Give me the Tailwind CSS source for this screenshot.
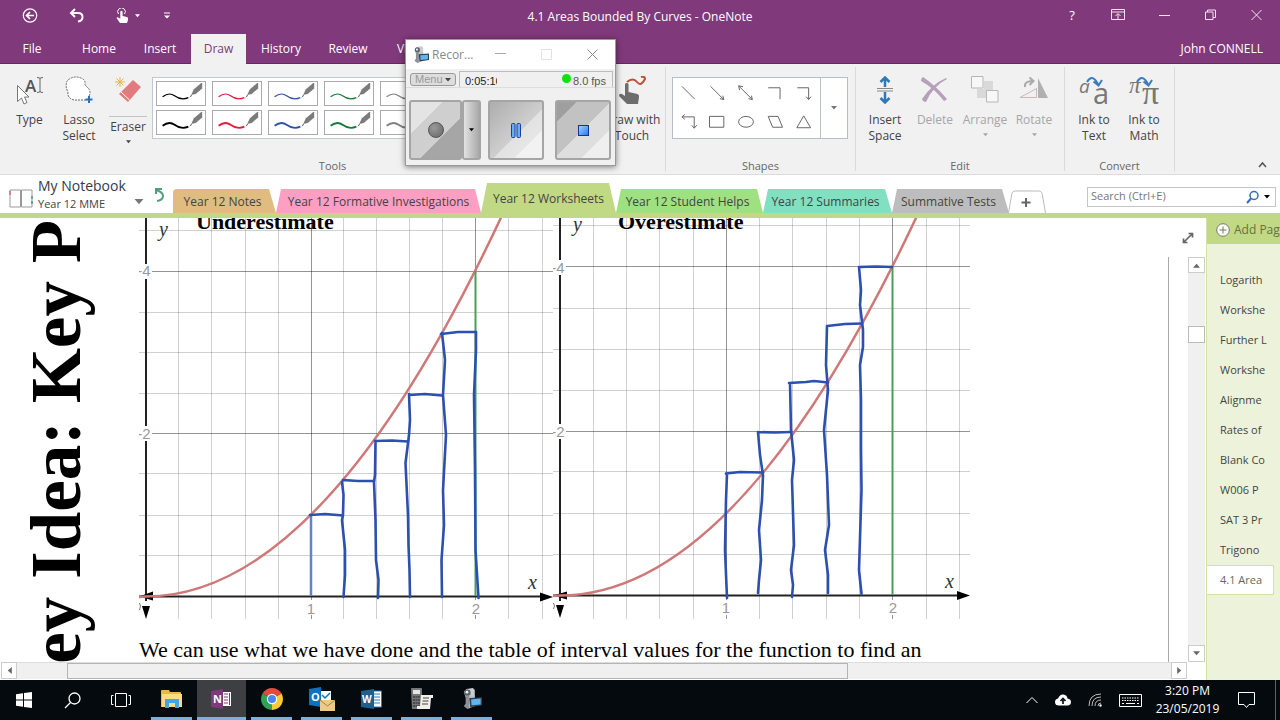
<!DOCTYPE html>
<html lang="en">
<head>
    <meta charset="UTF-8">
    <meta name="viewport" content="width=device-width, initial-scale=1.0">
    <title>4.1 Areas Bounded By Curves - OneNote</title>
    <script src="https://cdn.jsdelivr.net/npm/@tailwindcss/browser@4"></script>
</head>
<body class="h-screen flex flex-col overflow-hidden bg-white font-['Open_Sans','Noto_Sans',sans-serif] text-xs text-[#444]">

    <!-- shared shapes -->
    <svg class="hidden">
        <symbol id="pen-thin" viewBox="0 0 46 25">
            <path d="M3 16C7 13 12 12 16 15S24 20 31 17" fill="none" stroke="currentColor" stroke-width="1.3"/>
            <path d="M32 17l2-3 1 1z" fill="#444"/><path d="M34 14l3-6 8-7 1 0v6l-7 6z" fill="#7b7b7b"/>
        </symbol>
        <symbol id="pen-thick" viewBox="0 0 46 25">
            <path d="M3 16C7 13 12 12 16 15S24 20 31 17" fill="none" stroke="currentColor" stroke-width="2"/>
            <path d="M32 17l2-3 1 1z" fill="#444"/><path d="M34 14l3-6 8-7 1 0v6l-7 6z" fill="#7b7b7b"/>
        </symbol>
        <symbol id="caret" viewBox="0 0 6 4"><path d="M0 0h6L3 3.5z" fill="currentColor"/></symbol>
        <symbol id="camcorder" viewBox="0 0 22 24">
            <path d="M2 4l3-3 7-1 2 2v8H4z" fill="#c9cdd1"/><circle cx="6" cy="5" r="3.500" fill="#5b6066"/><circle cx="5.500" cy="4.500" r="1.500" fill="#eef2f5"/>
            <path d="M4 9l5-1v14l-3 1-4-3 2-3z" fill="#8c9197"/><path d="M8 8h6v12l-6 2z" fill="#bfc4c9"/>
            <path d="M8 11l14-1v9l-13 2z" fill="#33414e"/><path d="M10 12.500l10.500-1v6.500l-10 1z" fill="#62b4ee"/>
        </symbol>
    </svg>

    <header class="shrink-0 bg-[#80397b] text-white border-b border-[#6c2468]">
        <div class="relative h-[34px] flex items-center justify-between">
            <div class="flex items-center pb-[2px]">
                <button aria-label="Back" class="ml-[22px]"><svg class="size-4" viewBox="0 0 16 16" fill="none" stroke="#fff" stroke-width="1.200"><circle cx="8" cy="7.500" r="6.700"/><path stroke-width="1.700" d="M12 7.500H4.500M8 4L4.500 7.500 8 11"/></svg></button>
                <button aria-label="Undo" class="ml-[31px]"><svg class="size-4" viewBox="0 0 16 16" fill="none" stroke="#fff" stroke-width="2"><path d="M6 1L2 5l4 4M2 5h7c6 0 6 8 0 8.500"/></svg></button>
                <button aria-label="Touch mode" class="ml-[30px] flex items-center gap-1"><svg class="size-4" viewBox="0 0 16 16"><path d="M3.500 6A3.800 3.800 0 1 1 9.500 6" fill="none" stroke="#fff" stroke-width="1"/><path d="M5.300 3.500q1.200-1.300 2.300 0V8l4.400 1q1 .4 1 1.500V12l-1 3H5L1.500 10q.8-1.500 2.300-.3l1.500 1z" fill="#fff"/></svg><svg class="w-[5px] h-1"><use href="#caret"/></svg></button>
                <button aria-label="Customise toolbar" class="ml-[24px]"><svg class="w-[6px] h-2" viewBox="0 0 6 8"><path d="M0 1h6" stroke="#fff"/><path d="M0 3.500h6L3 6.500z" fill="#fff"/></svg></button>
            </div>
            <div class="absolute left-1/2 -translate-x-1/2 top-[9px]">4.1 Areas Bounded By Curves - OneNote</div>
            <div class="flex items-center pr-px pb-[3px]">
                <button aria-label="Help" class="w-[46px] text-[13px] text-center">?</button>
                <button aria-label="Ribbon display" class="w-[46px] flex justify-center"><svg class="w-[14px] h-3" viewBox="0 0 14 12" fill="none" stroke="#f3e6f2"><path d="M.5.5h13v10H.5zM.5 3h13M7 10V5M4.500 7L7 4.500 9.500 7"/></svg></button>
                <button aria-label="Minimise" class="w-[46px] flex justify-center"><svg class="w-[11px] h-3" viewBox="0 0 11 12"><path d="M0 6.500h11" stroke="#f3e6f2"/></svg></button>
                <button aria-label="Restore" class="w-[46px] flex justify-center"><svg class="w-[11px] h-3" viewBox="0 0 11 12" fill="none" stroke="#f3e6f2"><path d="M.5 3h7.500v7.500H.5zM2.500 3V1h8v7.500H8"/></svg></button>
                <button aria-label="Close" class="w-[46px] flex justify-center"><svg class="w-[11px] h-3" viewBox="0 0 11 12" fill="none" stroke="#f3e6f2"><path d="M.5 1l10 10M10.500 1l-10 10"/></svg></button>
            </div>
        </div>
        <nav class="h-[29px] flex">
            <button class="w-[64px] pt-px">File</button>
            <button class="w-[70px] pt-px">Home</button>
            <button class="w-[52px] pt-px">Insert</button>
            <button class="ml-[5px] w-[55px] h-[30px] bg-[#f1f1f1] text-[#80397b]">Draw</button>
            <button class="w-[70px] pt-px">History</button>
            <button class="w-[64px] pt-px">Review</button>
            <button class="w-[60px] pt-px">View</button>
            <button class="ml-auto pr-[17px]">John CONNELL</button>
        </nav>
    </header>

    <!-- ribbon -->
    <section class="shrink-0 h-[111px] flex bg-[#f1f1f1] border-b border-[#dcdcdc] leading-4">
        <div class="w-[665px] flex flex-col">
            <div class="h-[94px] pl-1 pt-3 flex items-start">
                <button class="w-[50px] pl-px flex flex-col items-center">
                    <span class="h-9"><svg class="w-7 h-[30px] overflow-visible" viewBox="0 0 28 30"><text x="9" y="16" font-size="17" font-weight="600" fill="#555" font-family="Open Sans">A</text><path d="M21 1.500q2.500 0 3 1 .5-1 3-1M24 2v14M21 16.500q2.500 0 3-1 .5 1 3 1" fill="none" stroke="#666"/><path d="M1.500 9.500v16l4-3.500 2.500 6 3-1.500L8.500 21H13z" fill="#fff" stroke="#777"/></svg></span>Type
                </button>
                <button class="w-[50px] flex flex-col items-center">
                    <span class="h-9"><svg class="w-7 h-[30px]" viewBox="0 0 28 30"><path d="M21 24H9Q2 22 3 16 0 11 2 5 8-1 16 2q5 2 4 7l4 4q2 4 0 7" fill="#fff" stroke="#666" stroke-dasharray="2 1"/><path d="M24 20v7M20.500 23.500h7" stroke="#2a70b8" stroke-width="2"/></svg></span>Lasso<br>Select
                </button>
                <button class="w-12 flex flex-col items-center">
                    <span class="h-[41px] w-[38px] border-b border-[#c4c4c4]"><svg class="w-7 h-[30px] mx-auto" viewBox="0 0 28 30"><path d="M6 1v10M1 6h10M2.500 2.500l7 7M9.500 2.500l-7 7" stroke="#e5b549"/><path d="M19 4l8 7-13 15-9-8z" fill="#e17b7d"/><path d="M7 16l8.500 8" stroke="#fff"/></svg></span>
                    <span class="mt-[2px]">Eraser</span>
                    <svg class="mt-[5px] w-[5px] h-1"><use href="#caret"/></svg>
                </button>
                <div class="mt-px w-[450px] h-[62px] p-[3px] border border-[#c3c7d3] bg-white grid grid-cols-8 grid-rows-2 gap-x-[6px] gap-y-1">
                    <button aria-label="Black pen" class="border border-[#ababab] text-black"><svg class="w-full h-full"><use href="#pen-thin"/></svg></button>
                    <button aria-label="Red pen" class="border border-[#ababab] text-[#e01b3c]"><svg class="w-full h-full"><use href="#pen-thin"/></svg></button>
                    <button aria-label="Blue pen" class="border border-[#ababab] text-[#2c53a8]"><svg class="w-full h-full"><use href="#pen-thin"/></svg></button>
                    <button aria-label="Green pen" class="border border-[#ababab] text-[#137a38]"><svg class="w-full h-full"><use href="#pen-thin"/></svg></button>
                    <button aria-label="Grey pen" class="border border-[#ababab] text-[#808080]"><svg class="w-full h-full"><use href="#pen-thin"/></svg></button>
                    <span></span><span></span><span></span>
                    <button aria-label="Thick black pen" class="border border-[#ababab] text-black"><svg class="w-full h-full"><use href="#pen-thick"/></svg></button>
                    <button aria-label="Thick red pen" class="border border-[#ababab] text-[#e01b3c]"><svg class="w-full h-full"><use href="#pen-thick"/></svg></button>
                    <button aria-label="Thick blue pen" class="border border-[#ababab] text-[#2c53a8]"><svg class="w-full h-full"><use href="#pen-thick"/></svg></button>
                    <button aria-label="Thick green pen" class="border border-[#ababab] text-[#137a38]"><svg class="w-full h-full"><use href="#pen-thick"/></svg></button>
                    <button aria-label="Thick grey pen" class="border border-[#ababab] text-[#808080]"><svg class="w-full h-full"><use href="#pen-thick"/></svg></button>
                </div>
                <button class="w-[60px] flex flex-col items-center whitespace-nowrap">
                    <span class="h-9"><svg class="w-7 h-[30px]" viewBox="0 0 28 30"><path d="M9 6q6-5 10 0t8-3Q27 0 23 1" fill="none" stroke="#c1502e" stroke-width="2"/><path d="M7 8q2-2 3.500 0v8l9 2q2 1 1.500 3l-1 7H9L1 20q0-3 3-2l3 2z" fill="#6d6d6d"/></svg></span>Draw with<br>Touch
                </button>
            </div>
            <div class="text-center text-[11px] text-[#666]">Tools</div>
        </div>
        <div class="w-px my-[3px] bg-[#dadada]"></div>
        <div class="w-[189px] flex flex-col">
            <div class="h-[94px] pl-[6px] pt-[13px] flex items-start">
                <div class="w-[149px] h-[62px] px-px border border-[#b9bdcb] bg-white">
                    <svg class="w-full h-full" viewBox="673 78 147 60" fill="none" stroke="#666">
                        <path d="M681 86l13 13M710 86l13 13M739 86l13 13M768.500 87.500h12V99M798 87.500h11.500V99M682 117h11.500v11M709 116.500h14.500v11H709zM768.500 116.500h10l4.500 11h-10zM804.500 116l7 12h-14z"/>
                        <ellipse cx="746" cy="122" rx="7.500" ry="5.500"/>
                        <path d="M719.500 98.500l4 1-1-4M748.500 98.500l4 1-1-4M743 86.500l-4.500-1 1 4.500M807 96.500l2.500 3 2.500-3M691 125.500l2.500 3 2.500-3M684 114.500l-3 2.500 3 2.500"/>
                    </svg>
                </div>
                <button aria-label="More shapes" class="-ml-px w-[28px] h-[62px] border border-[#b9bdcb] bg-white flex items-center justify-center text-[#777]"><svg class="w-[6px] h-1"><use href="#caret"/></svg></button>
            </div>
            <div class="text-center text-[11px] text-[#666]">Shapes</div>
        </div>
        <div class="w-px my-[3px] bg-[#dadada]"></div>
        <div class="w-[208px] flex flex-col">
            <div class="h-[94px] pl-1 pt-3 flex items-start">
                <button class="w-[50px] flex flex-col items-center">
                    <span class="h-9"><svg class="w-7 h-[30px]" viewBox="0 0 28 30" fill="none" stroke="#2f78b8" stroke-width="2.500"><path d="M14 2v9M9.500 6L14 1.500 18.500 6M14 16v9M9.500 22l4.500 4.500 4.500-4.500"/><path d="M6 12.500h16M6 15h16" stroke="#888" stroke-width="1"/></svg></span>Insert<br>Space
                </button>
                <button disabled class="w-[50px] flex flex-col items-center text-[#a6a6a6]">
                    <span class="h-9"><svg class="w-7 h-[30px]" viewBox="0 0 28 30"><path d="M2 1q12 8 24 22-2 2-3 2Q13 12 0 5q0-3 2-4zM26 3Q12 10 5 26q-3 0-4-3Q11 8 25 2z" fill="#b59fb9"/></svg></span>Delete
                </button>
                <button disabled class="w-[50px] flex flex-col items-center text-[#a6a6a6]">
                    <span class="h-9"><svg class="w-7 h-[30px]" viewBox="0 0 28 30" stroke="#b6b6b6"><path d="M13 5h9v9h-9zM6 13h9v9H6z" fill="#d9d9d9" stroke="none"/><path d="M.5.5h11.500V12H.5zM15.500 14.500H27V26H15.500z" fill="#f7f7f7"/></svg></span>Arrange
                    <svg class="mt-[5px] w-[5px] h-1"><use href="#caret"/></svg>
                </button>
                <button disabled class="w-[50px] pr-[2px] flex flex-col items-center text-[#a6a6a6]">
                    <span class="h-9"><svg class="w-[30px] h-[30px]" viewBox="0 0 30 30"><path d="M1 21.500h16.500v-9z" fill="#f5eeee" stroke="#c9b9b9"/><path d="M19 2v20h10z" fill="#b0b0b0"/><path d="M6 11Q5 5 14 5M10.500 1.500L14.500 5l-4 4" fill="none" stroke="#aaa" stroke-width="2"/></svg></span>Rotate
                    <svg class="mt-[5px] w-[5px] h-1"><use href="#caret"/></svg>
                </button>
            </div>
            <div class="text-center text-[11px] text-[#666]">Edit</div>
        </div>
        <div class="w-px my-[3px] bg-[#dadada]"></div>
        <div class="w-[109px] flex flex-col">
            <div class="h-[94px] pl-1 pt-3 flex items-start">
                <button class="w-[50px] flex flex-col items-center">
                    <span class="h-9"><svg class="w-[30px] h-[30px] overflow-visible" viewBox="0 0 30 30"><text x="0" y="17" font-size="19" font-style="italic" fill="#777" font-family="Open Sans">a</text><text x="14" y="28" font-size="29" fill="#777" font-family="Open Sans">a</text><path d="M8 6Q13-3 19 8M14.500 5.500l5 4L23 4" fill="none" stroke="#3b7dbf" stroke-width="2"/></svg></span>Ink to<br>Text
                </button>
                <button class="w-[50px] flex flex-col items-center">
                    <span class="h-9"><svg class="w-[30px] h-[30px] overflow-visible" viewBox="0 0 30 30"><text x="0" y="17" font-size="23" font-style="italic" fill="#777" font-family="Liberation Serif">π</text><text x="13" y="28" font-size="34" fill="#777" font-family="Liberation Serif">π</text><path d="M8 6Q13-3 19 8M14.500 5.500l5 4L23 4" fill="none" stroke="#3b7dbf" stroke-width="2"/></svg></span>Ink to<br>Math
                </button>
            </div>
            <div class="text-center text-[11px] text-[#666]">Convert</div>
        </div>
        <div class="w-px my-[3px] bg-[#dadada]"></div>
        <button aria-label="Collapse ribbon" class="ml-auto self-end mr-[13px] mb-[5px]"><svg class="w-[9px] h-2" viewBox="0 0 9 8" fill="none" stroke="#555" stroke-width="1.500"><path d="M1 6l3.500-4L8 6"/></svg></button>
    </section>

    <!-- notebook and section tabs -->
    <section class="shrink-0 h-[43px] flex items-end border-b-5 border-[#c1d984]">
        <button class="w-[147px] h-[38px] pl-[9px] pt-[2px] flex items-start text-left">
            <svg class="mt-[11px] w-6 h-5" viewBox="0 0 24 20" fill="none"><path d="M1 2h10.500v17H1zM12.500 2H23v17H12.500z" stroke="#999"/><path d="M1 3v4" stroke="#c88" stroke-width="2"/><path d="M23 8v3M23 13v3" stroke="#6aa58c" stroke-width="2"/></svg>
            <span class="ml-[5px] flex-1"><span class="block text-sm leading-[18px] text-[#333a4a]">My Notebook</span><span class="block text-[11px] leading-[18px] text-[#444]">Year 12 MME</span></span>
            <svg class="mt-[22px] mr-[3px] w-[10px] h-[6px] text-[#777]"><use href="#caret"/></svg>
        </button>
        <button aria-label="Sync" class="ml-[7px] w-[19px] mb-[10px]"><svg class="w-[10px] h-4" viewBox="0 0 10 16" fill="none" stroke="#4f9f78" stroke-width="2"><path d="M8 2H2v5M2 3q7 2 7 6t-6 5"/></svg></button>
        <button class="w-[103px] h-6 pt-[2px] pr-1 bg-[#dfbd80] rounded-tl-sm [clip-path:polygon(0_0,96px_0,100%_100%,0_100%)]">Year 12 Notes</button>
        <button class="w-[205px] h-6 pt-[2px] bg-[#fd9fc3] [clip-path:polygon(0_100%,5px_0,199px_0,100%_100%)]">Year 12 Formative Investigations</button>
        <button class="w-[135px] h-[30px] pt-[2px] bg-[#c1d984] [clip-path:polygon(0_100%,6px_0,128px_0,100%_100%)]">Year 12 Worksheets</button>
        <button class="w-[147px] h-6 pt-[2px] pr-1 bg-[#9fe080] [clip-path:polygon(0_100%,5px_0,141px_0,100%_100%)]">Year 12 Student Helps</button>
        <button class="w-[129px] h-6 pt-[2px] pr-1 bg-[#80e0c0] [clip-path:polygon(0_100%,5px_0,122px_0,100%_100%)]">Year 12 Summaries</button>
        <button class="w-[117px] h-6 pt-[2px] pr-1 bg-[#bdbdbd] [clip-path:polygon(0_100%,5px_0,110px_0,100%_100%)]">Summative Tests</button>
        <button aria-label="New section" class="-ml-px"><svg class="w-[38px] h-[23px]" viewBox="0 0 38 23" fill="none"><path d="M.5 23L4 3q1-2 3-2h24q2 0 3 2l3.500 20" stroke="#bbb"/><path d="M18 8v9M13.500 12.500h9" stroke="#666" stroke-width="2"/></svg></button>
        <form class="ml-auto mr-1 mb-[6px] w-[189px] h-5 flex items-center border border-[#c5c5c5]">
            <label for="search" class="sr-only">Search</label>
            <input id="search" type="search" placeholder="Search (Ctrl+E)" class="flex-1 min-w-0 px-[3px] pb-[2px] text-[11px] leading-4 outline-none placeholder:text-[#777]">
            <button type="button" aria-label="Search" class="flex items-center gap-1 pr-[5px] text-black"><svg class="w-[14px] h-[14px]" viewBox="0 0 14 14" fill="none" stroke="#2f6fb5" stroke-width="1.500"><circle cx="8" cy="5.500" r="4"/><path d="M5 8.500L1 13" stroke-width="2"/></svg><svg class="w-[6px] h-1"><use href="#caret"/></svg></button>
        </form>
    </section>

    <main class="flex-1 min-h-0 flex">
        <div class="flex-1 min-w-0 flex flex-col">
            <div class="relative flex-1 min-h-0 flex">
                <article class="flex-1 min-w-0 flex overflow-hidden text-black">
                    <div class="relative w-[139px] shrink-0">
                        <h1 class="absolute left-4 -bottom-[57px] [writing-mode:vertical-rl] rotate-180 whitespace-nowrap font-['Liberation_Serif',serif] font-bold text-[71px] leading-[80px]">Key Idea: Key P</h1>
                    </div>
                    <div class="shrink-0">
                        <div class="flex">
                            <figure class="relative">
                                <figcaption class="absolute left-[57px] -top-2 leading-6 font-['Liberation_Serif',serif] font-bold text-[22px]">Underestimate</figcaption>
                                <svg class="w-[414px] h-[401px]" viewBox="139 218 414 401" fill="none">
                                    <path d="M178.500 218v401M211.500 218v401M245.500 218v401M278.500 218v401M343.500 218v401M376.500 218v401M409.500 218v401M442.500 218v401M508.500 218v401M542.500 218v401M139 230.500h414M139 312.500h414M139 352.500h414M139 393.500h414M139 473.500h414M139 515.500h414M139 555.500h414" stroke="#000" stroke-opacity=".18"/>
                                    <path d="M311.500 218v382M311.500 615v4M475.500 218v382M475.500 615v4M152 271.500h401M152 433.500h401" stroke="#000" stroke-opacity=".42"/>
                                    <path d="M146 218v46M146 279v147M146 441v160M139 596.500h404" stroke="#222" stroke-width="2"/>
                                    <path d="M139 596.500l14-5v9zM553 597l-13-4.500v9zM146 619l-4-13h8z" fill="#000"/>
                                    <path d="M139 597L146 596.500Q327 596.500 508 202.500" stroke="#d07878" stroke-width="2.500"/>
                                    <path d="M475.500 271v325" stroke="#4d9d5c" stroke-width="2"/>
                                    <path d="M311 515v81" stroke="#5a88c4" stroke-width="2.500"/>
                                    <g stroke="#2c50b0" stroke-width="2.600" stroke-linecap="round" stroke-linejoin="round">
                                        <path d="M310 515l15-1 18 1.500M342 482l1.500 13-.5 20-1 5 3 30v25l-1.500 22M343 480l15 1h16"/>
                                        <path d="M375.500 441l-.5 34-1 7 1.500 38 .5 40 2.500 20-.5 18M375 441l17-.5 16 1"/>
                                        <path d="M409 394l1 26-1 15-3.500 28 2.500 52 .5 30 1 25 .5 27M409 395l16-1 17 1.500"/>
                                        <path d="M442 333l3 27-2 35 3 40-3 55 1 35-2.500 35 .5 37M441 334l17-2h18"/>
                                        <path d="M476 332v18l-2 45 1 75 .5 80 3 48"/>
                                    </g>
                                    <g font-family="Liberation Sans" font-size="15" fill="#999" text-anchor="middle"><text x="311" y="614">1</text><text x="476" y="614">2</text><text x="144" y="276">-4</text><text x="144" y="439">-2</text></g>
                                    <path d="M139.500 603q2 3 0 7" stroke="#777"/>
                                    <g font-family="Liberation Serif" font-size="20" font-style="italic" fill="#333"><text x="528" y="589">x</text><text x="159" y="236">y</text></g>
                                </svg>
                            </figure>
                            <figure class="relative">
                                <figcaption class="absolute left-[65px] -top-2 leading-6 font-['Liberation_Serif',serif] font-bold text-[22px]">Overestimate</figcaption>
                                <svg class="w-[418px] h-[401px]" viewBox="553 218 418 401" fill="none">
                                    <path d="M593.500 218v401M626.500 218v401M659.500 218v401M693.500 218v401M759.500 218v401M792.500 218v401M826.500 218v401M859.500 218v401M926.500 218v401M959.500 218v401M553 225.500h417M553 308.500h417M553 349.500h417M553 390.500h417M553 471.500h417M553 513.500h417M553 554.500h417" stroke="#000" stroke-opacity=".18"/>
                                    <path d="M726.500 218v382M726.500 615v4M892.500 218v382M892.500 615v4M566 266.500h404M566 431.500h404" stroke="#000" stroke-opacity=".42"/>
                                    <path d="M560 218v42M560 275v149M560 439v162M553 595.500h408" stroke="#222" stroke-width="2"/>
                                    <path d="M553 595.500l14-4v8zM970 595.500l-13-4.500v9zM560 618l-4-13h8z" fill="#000"/>
                                    <path d="M553 596L560 595.500Q743 595.500 925.500 197.500" stroke="#d07878" stroke-width="2.500"/>
                                    <path d="M892.500 267v328" stroke="#4d9d5c" stroke-width="2"/>
                                    <g stroke="#2c50b0" stroke-width="2.600" stroke-linecap="round" stroke-linejoin="round">
                                        <path d="M727 474l-1 26-1 50 2 48M726 473.500l14-1.500 23 .5"/>
                                        <path d="M758 432l2 23 3 20-1 25-3 30 2 30-2 20-1 13M758 432l17 .5 16-.5"/>
                                        <path d="M790 383l1 47 3 30-2 20 2 65-3 25 2 15-1 12M789 383l17-1 8-1 14 1.500"/>
                                        <path d="M827 326l-1 39 2 25-3 30-1 10 3 45 2 50-4 25 3 25 0 18M827 326l18-2 17-.5"/>
                                        <path d="M859 267l2 23-1 15 3 25v17l-3 18 1 35v50l.5 40-2.500 80 2.500 24M859 267l17-.5 16 .5"/>
                                    </g>
                                    <g font-family="Liberation Sans" font-size="15" fill="#999" text-anchor="middle"><text x="726" y="613">1</text><text x="893" y="613">2</text><text x="558" y="273">-4</text><text x="558" y="437">-2</text></g>
                                    <path d="M553.500 603q2 3 0 6" stroke="#777"/>
                                    <g font-family="Liberation Serif" font-size="20" font-style="italic" fill="#333"><text x="945" y="588">x</text><text x="573" y="231">y</text></g>
                                </svg>
                            </figure>
                        </div>
                        <p class="mt-[18px] whitespace-nowrap leading-[26px] font-['Liberation_Serif',serif] text-[22px]">We can use what we have done and the table of interval values for the function to find an</p>
                    </div>
                    <div class="ml-auto mt-[39px] mr-[19px] w-px bg-[#a9a9a9]"></div>
                </article>
                <button aria-label="Full page view" class="absolute right-3 top-[14px]"><svg class="size-3" viewBox="0 0 12 12" fill="none" stroke="#666" stroke-width="1.700"><path d="M2 10l8-8M6.500 1.500h4v4M1.500 6.500v4h4"/></svg></button>
                <!-- vertical scrollbar -->
                <div class="w-[18px] pt-[39px] pr-px flex flex-col">
                    <button aria-label="Scroll up" class="h-4 border border-[#ccc] bg-white flex items-center justify-center text-[#666]"><svg class="w-[7px] h-[5px] rotate-180"><use href="#caret"/></svg></button>
                    <div class="flex-1 bg-[#f0f0f0] pt-[53px]"><div class="h-[17px] border border-[#bbb] bg-white"></div></div>
                    <button aria-label="Scroll down" class="h-[17px] border border-[#ccc] bg-white flex items-center justify-center text-[#666]"><svg class="w-[7px] h-[5px]"><use href="#caret"/></svg></button>
                </div>
            </div>
            <!-- horizontal scrollbar -->
            <div class="h-[17px] mb-px mr-[18px] px-px flex">
                <button aria-label="Scroll left" class="w-4 border border-[#ccc] bg-white flex items-center justify-center text-[#666]"><svg class="w-[7px] h-[5px] rotate-90"><use href="#caret"/></svg></button>
                <div class="flex-1 flex bg-[#f0f0f0] border-t border-[#ddd]"><div class="ml-[4.300%] w-[67.700%] border border-[#b4b4b4] bg-[#f0f0f0]"></div></div>
                <button aria-label="Scroll right" class="w-4 border border-[#ccc] bg-white flex items-center justify-center text-[#666]"><svg class="w-[7px] h-[5px] -rotate-90"><use href="#caret"/></svg></button>
            </div>
        </div>

        <!-- page list -->
        <aside class="w-[74px] shrink-0 overflow-hidden border-l border-[#d3e3a6] bg-[#edf3db] whitespace-nowrap">
            <button class="h-[26px] w-[110px] pl-[9px] pb-[3px] flex items-center gap-1 bg-[#c1d984] text-[#667044]"><svg class="size-[14px]" viewBox="0 0 14 14" fill="none" stroke="#777"><circle cx="7" cy="7" r="6.300" fill="#fbfdf5"/><path d="M7 3.500v7M3.500 7h7"/></svg>Add Page</button>
            <ul class="pt-[21px] text-[11px] text-[#444] leading-[30px]">
                <li class="h-[30px] pl-[13px]"><a href="#">Logarith</a></li>
                <li class="h-[30px] pl-[13px]"><a href="#">Workshe</a></li>
                <li class="h-[30px] pl-[13px]"><a href="#">Further L</a></li>
                <li class="h-[30px] pl-[13px]"><a href="#">Workshe</a></li>
                <li class="h-[30px] pl-[13px]"><a href="#">Alignme</a></li>
                <li class="h-[30px] pl-[13px]"><a href="#">Rates of</a></li>
                <li class="h-[30px] pl-[13px]"><a href="#">Blank Co</a></li>
                <li class="h-[30px] pl-[13px]"><a href="#">W006 P</a></li>
                <li class="h-[30px] pl-[13px]"><a href="#">SAT 3 Pr</a></li>
                <li class="h-[30px] pl-[13px]"><a href="#">Trigono</a></li>
                <li class="h-[30px] pl-[13px] mr-[6px] -ml-px border border-l-0 border-[#d3e3a6] bg-white leading-7"><a href="#" class="pl-px text-[#666]">4.1 Area</a></li>
            </ul>
        </aside>
    </main>

    <!-- taskbar -->
    <footer class="shrink-0 h-10 flex bg-[#050a0f] text-white">
        <button aria-label="Start" class="w-12 grid place-items-center"><svg class="size-4" viewBox="0 0 16 16" fill="#fff"><path d="M0 2.200l7-1v6.300H0zM8 1l8-1v7.500H8zM0 8.500h7v6.300l-7-1zM8 8.500h8V16l-8-1z"/></svg></button>
        <button aria-label="Search" class="w-12 grid place-items-center"><svg class="size-[17px]" viewBox="0 0 17 17" fill="none" stroke="#fff" stroke-width="1.300"><circle cx="10.500" cy="6.500" r="5.500"/><path d="M6.500 10.500L1 16"/></svg></button>
        <button aria-label="Task view" class="w-[50px] grid place-items-center"><svg class="w-5 h-4" viewBox="0 0 20 16" fill="none" stroke="#fff"><path d="M4.500 1.500h11v13h-11zM2.500 3.500h-2v9h2M17.500 3.500h2v9h-2"/></svg></button>
        <button aria-label="File Explorer" class="mx-[5px] w-[41px] border-b-3 border-[#76b0e8] grid place-items-center"><svg class="w-[22px] h-5" viewBox="0 0 22 20"><path d="M0 2q0-1 1-1h7l1 2h10q1 0 1 1v14H0z" fill="#e8b84d"/><path d="M1 5h20v13H1z" fill="#fbdc84"/><path d="M4 10h14v9h-4v-5H8v5H4z" fill="#3fa9e8"/></svg></button>
        <button aria-label="OneNote" class="w-[49px] border-b-3 border-[#76b0e8] bg-[#3e3f42] grid place-items-center"><svg class="w-[21px] h-5" viewBox="0 0 21 20"><path d="M11 3h9v14h-9z" fill="#fff"/><path d="M13 5h4M13 8h4M13 11h4M13 14h4M18.500 4v12" stroke="#80397b"/><path d="M0 2l12-2v20L0 18z" fill="#80397b"/><text x="2" y="14" font-size="11" font-weight="700" font-family="Open Sans" fill="#fff">N</text></svg></button>
        <button aria-label="Chrome" class="mx-[5px] w-[41px] border-b-3 border-[#76b0e8] grid place-items-center"><svg class="size-[22px]" viewBox="0 0 22 22"><path d="M11 11L1.500 5.500A11 11 0 0 1 20.500 5.500z" fill="#e24a3b"/><path d="M11 11l9.500-5.500A11 11 0 0 1 11 22z" fill="#f9cb31"/><path d="M11 11v11A11 11 0 0 1 1.500 5.500z" fill="#35a155"/><path d="M11 6h9.800q-.5-1-1-1.500H11z" fill="#e24a3b"/><circle cx="11" cy="11" r="5.200" fill="#fff"/><circle cx="11" cy="11" r="4" fill="#4a86ef"/></svg></button>
        <button aria-label="Outlook" class="ml-[4px] mr-[5px] w-[41px] border-b-3 border-[#76b0e8] grid place-items-center"><svg class="w-[26px] h-6 overflow-visible" viewBox="0 0 26 24"><path d="M12 4h10v12H12z" fill="#fff"/><path d="M13 8l3 3 5-5" fill="none" stroke="#0a72c0" stroke-width="1.500"/><path d="M0 2l12-2v20L0 18z" fill="#0a72c0"/><text x="2" y="14" font-size="11" font-weight="700" font-family="Open Sans" fill="#fff">O</text><path d="M11 13h15v11H11z" fill="#edcb85"/><path d="M11 13l7.500 6L26 13" fill="none" stroke="#a9843c"/></svg></button>
        <button aria-label="Word" class="mx-[4px] w-[41px] border-b-3 border-[#76b0e8] grid place-items-center"><svg class="w-[21px] h-5" viewBox="0 0 21 20"><path d="M11 2h9.500v16H11z" fill="#fff" stroke="#2b7cb5"/><path d="M13 5h6M13 8h6M13 11h6M13 14h6" stroke="#2b7cb5"/><path d="M0 2l13-2v20L0 18z" fill="#1d5f8f"/><text x="1" y="14" font-size="10" font-weight="700" font-family="Open Sans" fill="#fff">W</text></svg></button>
        <button aria-label="Calculator" class="mx-[5px] w-[41px] border-b-3 border-[#76b0e8] grid place-items-center"><svg class="w-[22px] h-[22px]" viewBox="0 0 22 22"><path d="M0 1q0-1 1-1h9q1 0 1 1v20H1z" fill="#777"/><path d="M2 2h7v4H2z" fill="#e5e5e5"/><path d="M2 9h7M2 12h7M2 15h7M2 18h7" stroke="#222" stroke-dasharray="2 .5"/><path d="M10 7h12v3h-2l-1 11H6v-3h3z" fill="#f2efe8"/><path d="M12 10h6M11.500 13h6M11 16h6" stroke="#444"/></svg></button>
        <button aria-label="Recorder" class="mx-[4px] w-[41px] border-b-3 border-[#76b0e8] grid place-items-center"><svg class="w-5 h-[22px]"><use href="#camcorder"/></svg></button>

        <div class="ml-auto flex items-center">
            <button aria-label="Show hidden icons" class="w-[31px] grid place-items-center"><svg class="w-3 h-2" viewBox="0 0 12 8" fill="none" stroke="#fff"><path d="M.5 7L6 1.500 11.500 7"/></svg></button>
            <button aria-label="Cloud sync" class="w-8 grid place-items-center"><svg class="w-4 h-3" viewBox="0 0 16 12"><path d="M4 11.500Q0 11.500 0 8q0-3 3-3.500Q5 0 8.500.500q3.500.500 4 4 3.500.500 3.500 3.500t-3 3.500z" fill="#fff"/><path d="M8 10V5M5.500 7L8 4.500 10.500 7" fill="none" stroke="#111" stroke-width="1.700"/></svg></button>
            <button aria-label="Network" class="w-8 grid place-items-center"><svg class="size-[14px]" viewBox="0 0 14 14" fill="none" stroke="#bbb"><path d="M1 13Q1 1 13 1M4 13q0-9 9-9M7 13q0-6 6-6M10 13q0-3 3-3"/><circle cx="12.500" cy="12.500" r="1" fill="#fff"/></svg></button>
            <button aria-label="Keyboard" class="w-[38px] grid place-items-center"><svg class="w-[23px] h-[13px]" viewBox="0 0 23 13" fill="none" stroke="#fff"><path d="M.5.5h22v12H.5z"/><path d="M3 4h17M3 6.500h17" stroke-dasharray="1.500 1"/><path d="M3 9.500h2M7 9.500h9M18 9.500h2"/></svg></button>
            <button class="w-[77px] leading-[18px] text-center"><time class="block">3:20 PM</time><time class="block">23/05/2019</time></button>
            <button aria-label="Notifications" class="w-[40px] grid place-items-center"><svg class="w-[17px] h-[17px]" viewBox="0 0 17 17" fill="none" stroke="#fff"><path d="M.5.500h16v12h-5.500L8.500 15.500 6 12.500H.5z"/></svg></button>
            <div class="ml-[9px] mr-1 w-px h-10 bg-[#5d6165]"></div>
        </div>
    </footer>

    <!-- floating recorder window -->
    <div class="absolute left-[405px] top-[39px] w-[211px] h-[127px] bg-[#f0f0f0] border border-[#999] shadow-[0_1px_6px_rgba(0,0,0,.5)]">
        <div class="h-[29px] pl-[7px] flex items-center bg-white text-[#888]">
            <svg class="w-4 h-[18px]"><use href="#camcorder"/></svg>
            <span class="ml-[3px]">Recor...</span>
            <div class="ml-auto flex text-[#999]">
                <button aria-label="Minimise" class="w-[46px] grid place-items-center"><svg class="w-[11px] h-[11px]" viewBox="0 0 11 11"><path d="M0 4.500h11" stroke="#aaa"/></svg></button>
                <button aria-label="Maximise" disabled class="w-[46px] grid place-items-center"><svg class="w-[11px] h-[11px]" viewBox="0 0 11 11" fill="none" stroke="#e2e2e2"><path d="M.5.5h10v10H.5z"/></svg></button>
                <button aria-label="Close" class="w-[46px] grid place-items-center"><svg class="w-[11px] h-[11px]" viewBox="0 0 11 11" stroke="#888"><path d="M.5.5l10 10M10.500.5l-10 10"/></svg></button>
            </div>
        </div>
        <div class="h-[19px] pt-[2px] pl-1 pr-[2px] flex overflow-hidden border-b border-[#ddd]">
            <button class="mt-[2px] w-[46px] h-[13px] px-1 flex items-center justify-between rounded-[3px] border border-[#999] bg-[#ddd] text-[11px] leading-[11px] text-[#999] font-['Liberation_Sans',sans-serif]">Menu<svg class="w-[6px] h-1 text-[#444]"><use href="#caret"/></svg></button>
            <div class="ml-[3px] flex-1 flex items-center border-l border-t border-r border-[#bbb] pl-[5px] pt-[2px] text-[11px] leading-4 text-[#222] font-['Liberation_Sans',sans-serif]">
                <span class="w-[32px] overflow-hidden">0:05:16</span>
                <span class="ml-auto mr-[2px] mb-1 size-[9px] rounded-full bg-[#0be30b]"></span>
                <span class="pr-[6px] text-[#555]">8.0 fps</span>
            </div>
        </div>
        <div class="h-[75px] pt-[12px] pl-[3px] flex">
            <button aria-label="Record" class="w-[53px] h-[60px] rounded-[3px] border-2 border-[#a5a5a5] bg-[linear-gradient(135deg,#e4e4e4_30%,#cecece_30%,#d0d0d0_62%,#a6a6a6_62%)] grid place-items-center"><span class="size-4 rounded-full border border-[#555] bg-[radial-gradient(circle_at_35%_35%,#999,#666)]"></span></button>
            <button aria-label="Record options" class="w-[19px] h-[60px] rounded-[3px] border-2 border-[#a5a5a5] bg-linear-to-r from-[#e2e2e2] to-[#a9a9a9] grid place-items-center text-black"><svg class="w-[5px] h-1"><use href="#caret"/></svg></button>
            <button aria-label="Pause" class="ml-[7px] w-[56px] h-[60px] rounded-[3px] border-2 border-[#a5a5a5] bg-[linear-gradient(135deg,#adadad,#cfcfcf_55%,#e2e2e2_55%,#e6e6e6_75%,#f2f2f2_75%)] grid place-items-center"><svg class="w-[10px] h-[15px]" viewBox="0 0 10 15" fill="#68aef5" stroke="#1b3f9c"><rect x=".5" y=".5" width="3.500" height="14" rx="1"/><rect x="6" y=".5" width="3.500" height="14" rx="1"/></svg></button>
            <button aria-label="Stop" class="ml-[11px] w-[56px] h-[60px] rounded-[3px] border-2 border-[#a5a5a5] bg-[linear-gradient(135deg,#9f9f9f_18%,#c2c2c2_18%,#c2c2c2_50%,#dedede_50%,#dedede_75%,#efefef_75%)] grid place-items-center"><span class="size-[11px] border border-[#15348f] bg-linear-to-br from-[#9fd0ff] to-[#1f7bf0]"></span></button>
        </div>
    </div>

</body>
</html>
